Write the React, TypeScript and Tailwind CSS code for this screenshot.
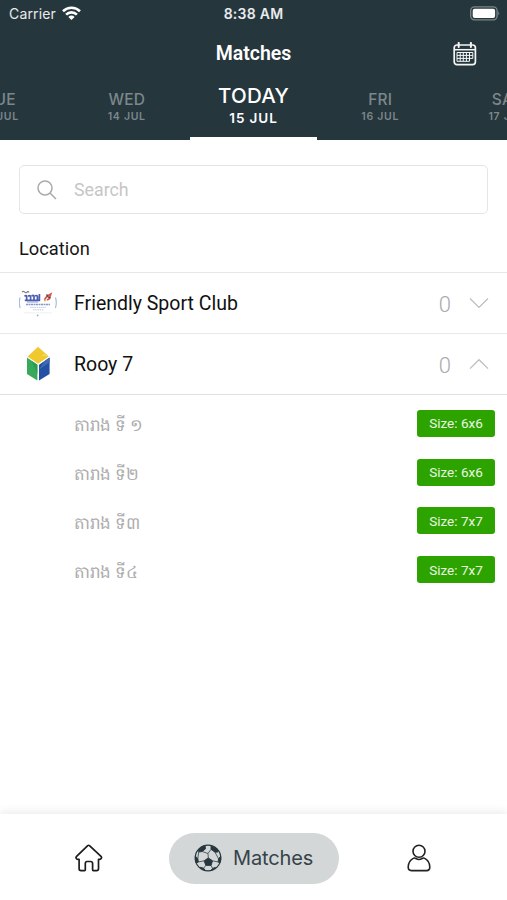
import { useState } from 'react';

interface Field {
  name: string;
  size: string;
}

interface Club {
  id: string;
  name: string;
  matches: number;
  logo: React.ReactNode;
  fields: Field[];
}

const days = [
  { day: 'TUE', date: '13 JUL' },
  { day: 'WED', date: '14 JUL' },
  { day: 'TODAY', date: '15 JUL' },
  { day: 'FRI', date: '16 JUL' },
  { day: 'SAT', date: '17 JUL' },
];

function FriendlyLogo() {
  return (
    <svg width="38" height="38" viewBox="0 0 38 38" fill="none">
      <path d="M1.2 13.5Q-.6 18.5 1.2 24M36.4 13.5q1.8 5 0 10.5" stroke="#a9bbe0" strokeWidth="1.2" />
      <path d="M3 8q1.5-1.4 2.6 0t2.6 0 1.6.6" stroke="#7d7f8a" strokeWidth="1.2" />
      <path
        d="M5.5 12.2q2-1.2 2.2.4v3.6M9 12.2q2-1.4 2.6.2v4M12.6 12q2-1.4 2.4.3v4M16 12q2-1.2 2.4.4v3.8M20.4 10v6M5.8 16.4h15.4"
        stroke="#4b5db0"
        strokeWidth="1.7"
      />
      <path d="M8 18h11" stroke="#8d9ace" strokeWidth="1" />
      <path d="M25.4 15.8l2.6-3.6 3.8-2.2-1.6 4.8-2.2 1.2" stroke="#dc5548" strokeWidth="1.7" />
      <path d="M27.6 10.4l1.6 2.6 2.4 1" stroke="#4a3f63" strokeWidth="1.2" />
      <circle cx="26" cy="16.6" r=".9" fill="#e6a23b" />
      <path d="M7 20.5h24" stroke="#8798cf" strokeWidth="1.6" strokeDasharray="2 .5" />
      <path d="M11 23.4h16M14 25.8h11" stroke="#c2cbe2" strokeWidth="1" strokeDasharray="1.6 .6" />
      <path d="M5 28.8h28" stroke="#eceef3" strokeWidth=".8" />
      <circle cx="18.6" cy="31.4" r=".9" fill="#9dacb8" />
    </svg>
  );
}

function RooyLogo() {
  return (
    <svg width="38" height="38" viewBox="0 0 38 38">
      <path d="M19 1.8L29.8 11.4 19 18.8 8.6 11.4z" fill="#efc92d" />
      <path d="M8 12.6l10.4 7.2v15.8L8 29z" fill="#38a85a" />
      <path d="M30.6 12.6L20 19.8v15.8L30.6 29z" fill="#2450a4" />
      <path d="M12.5 15.8l5.9 4v9.2z" fill="#2b9c52" />
      <path d="M20 24.5l6-8.8 4.6-3.1v4.6z" fill="#3c6bb4" />
      <path d="M22 10.8l4-2.6 3.4 3.2z" fill="#f3d654" />
    </svg>
  );
}

const clubs: Club[] = [
  { id: 'friendly', name: 'Friendly Sport Club', matches: 0, logo: <FriendlyLogo />, fields: [] },
  {
    id: 'rooy7',
    name: 'Rooy 7',
    matches: 0,
    logo: <RooyLogo />,
    fields: [
      { name: 'តារាង ទី ១', size: '6x6' },
      { name: 'តារាង ទី២', size: '6x6' },
      { name: 'តារាង ទី៣', size: '7x7' },
      { name: 'តារាង ទី៤', size: '7x7' },
    ],
  },
];

function StatusBar() {
  return (
    <div className="grid h-[27px] grid-cols-[1fr_auto_1fr] items-center pl-[9px] pr-[7px] font-['Inter'] text-[14px] text-white/90">
      <div className="flex items-center gap-1.5">
        <span className="tracking-[0.15px]">Carrier</span>
        <svg className="-mt-0.5" width="19" height="14" viewBox="0 0 19 14" fill="none" stroke="#fff" strokeWidth="2.6">
          <path d="M1 5.2a12.2 12.2 0 0 1 17 0" />
          <path d="M4.1 8.6a7.7 7.7 0 0 1 10.8 0" />
          <path d="M9.5 14L6.4 10.9a4.4 4.4 0 0 1 6.2 0z" fill="#fff" stroke="none" />
        </svg>
      </div>
      <span className="pr-0.5 text-[14px] font-semibold tracking-[0.25px]">8:38 AM</span>
      <svg className="justify-self-end" width="30" height="15" viewBox="0 0 30 15" fill="none">
        <rect x=".7" y=".8" width="26.4" height="13" rx="3.8" stroke="#7b868a" strokeWidth="1.3" />
        <rect x="2.7" y="2.7" width="22.4" height="9.2" rx="2" fill="#fff" />
        <path d="M28.3 5.2q1.8 2 0 4.2z" fill="#7b868a" />
      </svg>
    </div>
  );
}

function CalendarIcon() {
  return (
    <svg width="24" height="24" viewBox="0 0 24 24" fill="none" stroke="#f4f6f6">
      <rect x="1.2" y="3" width="21.2" height="19.6" rx="2.8" strokeWidth="1.7" />
      <path d="M1.2 7.7h21.2" strokeWidth="1.5" />
      <path d="M5.7.9v4.2M17.9.9v4.2" strokeWidth="2" strokeLinecap="round" />
      <path
        d="M4 10.5h15.8M4 13.4h15.8M4 16.4h15.8M4 19.3h12.5M4 10.5v8.8M7.2 10.5v8.8M10.3 10.5v8.8M13.4 10.5v8.8M16.5 10.5v8.8M19.8 10.5v5.9"
        strokeWidth="1"
      />
    </svg>
  );
}

function Chevron({ open }: { open: boolean }) {
  return (
    <svg width="20" height="12" viewBox="0 0 20 12" fill="none" stroke="#bdbdbd" strokeWidth="1.2">
      <path d={open ? 'M1 10.6L10 1.7l9 8.9' : 'M1 1.5l9 8.9 9-8.9'} />
    </svg>
  );
}

function BallIcon() {
  return (
    <svg width="28" height="28" viewBox="0 0 28 28" fill="none" stroke="#26363d">
      <circle cx="14" cy="14" r="12.8" strokeWidth="1.2" />
      <g fill="#26363d" strokeWidth=".9">
        <path d="M14.3 13.9l4.2 2.9-1.4 4.6h-5.3l-1.7-4.6z" />
        <path d="M4.6 5.4Q7.4 2.2 11 1.7l.6 3-3.4 2.8-3.5.6z" />
        <path d="M17 2l5.8 2.6 1.2 3.4-3 .2-4-2.9z" />
        <path d="M1.3 12.2l2.5 2.3.6 3.5-2.1 1.1q-1.2-3.3-1-6.9z" />
        <path d="M26.7 12.2l-2.2 2.5-.4 3.3 1.7.9q1.3-3.3.9-6.7z" />
        <path d="M6.3 23.2l3.4 1 1.3 2q-3.6-1-4.7-3zM21.5 23.4l-3 1-1.3 1.9q3-.9 4.3-2.9z" />
      </g>
      <path
        d="M14.3 13.9l-.3-4.4-5.8-2M14 9.5l3-4.2M4.7 8.1l-.9 6.4M21 8.2l3.5 6.5M10.1 16.8L4.4 18M18.5 16.8l5.6 1.2M11.8 21.4l-2.1 2.8M17.1 21.4l1.4 3"
        strokeWidth=".75"
      />
    </svg>
  );
}

export default function App() {
  const [selectedDay, setSelectedDay] = useState('TODAY');
  const [openClub, setOpenClub] = useState<string | null>('rooy7');
  const [search, setSearch] = useState('');

  return (
    <div className="flex h-[900px] w-full flex-col overflow-hidden bg-white font-['Roboto',sans-serif]">
      <header className="flex h-[140px] shrink-0 flex-col bg-[#26363d]">
        <StatusBar />
        <div className="grid h-[51px] grid-cols-[1fr_auto_1fr] items-center px-[30px]">
          <span />
          <h1 className="pt-0.5 text-[19.5px] font-semibold text-white">Matches</h1>
          <button type="button" className="mt-0.5 justify-self-end" aria-label="Calendar">
            <CalendarIcon />
          </button>
        </div>
        <nav className="flex flex-1 justify-center overflow-hidden font-['Inter']">
          {days.map(({ day, date }) => (
            <button
              key={day}
              type="button"
              onClick={() => setSelectedDay(day)}
              className={`flex w-1/4 shrink-0 flex-col items-center border-b-[3px] ${
                selectedDay === day
                  ? 'border-white pt-1.5 text-white'
                  : 'border-transparent pt-3 text-[#7c878b]'
              }`}
            >
              <span
                className={
                  selectedDay === day
                    ? 'text-[20.5px] font-medium leading-6 tracking-[0.2px]'
                    : 'text-[15.5px] font-medium leading-5 tracking-[0.2px]'
                }
              >
                {day}
              </span>
              <span
                className={
                  selectedDay === day
                    ? 'text-[13.5px] font-semibold leading-5 tracking-[0.9px]'
                    : 'text-[10.5px] font-semibold leading-[14px] tracking-[0.7px]'
                }
              >
                {date}
              </span>
            </button>
          ))}
        </nav>
      </header>

      <main className="flex-1">
        <div className="px-[19px] pt-[25px]">
          <label className="flex h-[49px] items-center gap-[17px] rounded-[5px] border border-[#e5e5e5] pl-[17px]">
            <svg width="20" height="20" viewBox="0 0 20 20" fill="none" stroke="#aaa" strokeWidth="1.5">
              <circle cx="8" cy="8" r="7" />
              <path d="M13 13l6 6" />
            </svg>
            <input
              value={search}
              onChange={(e) => setSearch(e.target.value)}
              placeholder="Search"
              className="flex-1 pt-0.5 text-[17.8px] outline-none placeholder:text-[#c6c6c6]"
            />
          </label>
        </div>

        <h2 className="flex h-[58px] items-center px-[19px] pt-3 text-[18.3px] text-[#161616]">Location</h2>

        {clubs.map((club) => {
          const open = openClub === club.id;
          return (
            <section key={club.id}>
              <button
                type="button"
                onClick={() => setOpenClub(open ? null : club.id)}
                className="flex h-[61px] w-full items-center border-t border-[#e7e7e7] pl-[19px] pr-[18px] text-left"
              >
                {club.logo}
                <span className="ml-[17px] flex-1 pt-0.5 text-[19.5px] text-[#111]">{club.name}</span>
                <span className="mr-[18px] pt-0.5 text-[22px] font-light text-[#aaa]">{club.matches}</span>
                <Chevron open={open} />
              </button>
              {open && (
                <ul className="border-t border-[#e0e0e0] pt-1">
                  {club.fields.map((field) => (
                    <li key={field.name} className="flex h-[48.8px] items-center justify-between pl-[74px] pr-3">
                      <span className="whitespace-nowrap pt-[5px] text-[16.8px] text-[#adadad]">{field.name}</span>
                      <span className="flex h-[27px] w-[78px] items-center justify-center rounded-[3px] bg-[#2da300] text-[13.5px] text-white/90">
                        Size: {field.size}
                      </span>
                    </li>
                  ))}
                </ul>
              )}
            </section>
          );
        })}
      </main>

      <footer className="grid h-[86px] shrink-0 grid-cols-[169px_170px_1fr] items-center bg-white pt-0.5 shadow-[0_-3px_8px_rgba(0,0,0,0.07)]">
        <button type="button" className="ml-[75px] justify-self-start" aria-label="Home">
          <svg width="28" height="28" viewBox="0 0 28 28" fill="none" stroke="#1c1c1c" strokeWidth="1.7" strokeLinejoin="round">
            <path d="M12.7 1.6q.9-.7 1.8 0L26 12.4q1.2 1.4-.2 2.5-.6.6-2.3.4v9.4q0 1.9-2 1.9h-3.2q-.7 0-.7-.8v-6.2q0-2.1-2-2.1h-3.5q-1.8 0-1.8 2.1v6.2q0 .8-.8.8H6.1q-2 0-2-1.9v-9.4q-2 .2-2.6-.6-1.1-1.1.1-2.3z" />
          </svg>
        </button>
        <button type="button" className="flex h-[51px] items-center rounded-full bg-[#d4d7d8] pl-[25px] text-[#36434a]">
          <BallIcon />
          <span className="ml-[11px] font-['Inter'] text-[20px] tracking-[-0.15px]">Matches</span>
        </button>
        <button type="button" className="ml-[68px] justify-self-start" aria-label="Profile">
          <svg width="24" height="28" viewBox="0 0 24 28" fill="none" stroke="#222" strokeWidth="1.6">
            <circle cx="12" cy="7.2" r="6" />
            <path d="M6.2 14.4q1.3-.8 2.7.1 3.1 2 6.2 0 1.4-.9 2.7-.1 4.9 2.6 5 8.6 0 3.6-3.2 3.6H4.4q-3.2 0-3.2-3.6.1-6 5-8.6z" />
          </svg>
        </button>
      </footer>
    </div>
  );
}
